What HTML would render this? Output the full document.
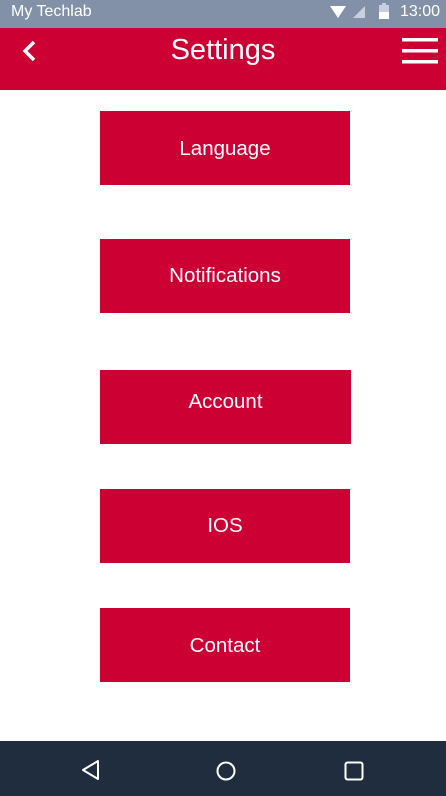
<!DOCTYPE html>
<html><head><style>
body{margin:0;width:446px;height:796px;position:relative;background:#fff;font-family:"Liberation Sans",sans-serif;overflow:hidden}
.sb{position:absolute;top:0;left:0;width:446px;height:28px;background:#8291a8;color:#fff;font-size:16px}
.hd{position:absolute;top:28px;left:0;width:446px;height:62px;background:#cc0033;color:#fff}
.b{position:absolute;left:100px;width:250px;height:74px;background:#cc0033;color:#fff;font-size:20.5px;display:flex;align-items:center;justify-content:center}
.nav{position:absolute;top:741px;left:0;width:446px;height:55px;background:#1f2d3f}
</style></head><body>
<div class="sb"><span style="position:absolute;left:11px;top:3px">My Techlab</span>
<svg style="position:absolute;left:330px;top:5px" width="16" height="14"><path d="M0 1 L16 1 L8 13 Z" fill="#fff"/></svg>
<svg style="position:absolute;left:353px;top:6px" width="12" height="12"><path d="M0 12 L12 0 L12 12 Z" fill="#c8d0dc"/></svg>
<svg style="position:absolute;left:379px;top:3px" width="10" height="16"><rect x="3" y="0" width="4" height="2" fill="#c8d0dc"/><rect x="0" y="2" width="10" height="14" fill="#c8d0dc"/><rect x="0" y="9" width="10" height="7" fill="#fff"/></svg>
<span style="position:absolute;left:400px;top:3px">13:00</span></div>
<div class="hd">
<svg style="position:absolute;left:20px;top:12px" width="18" height="22"><path d="M14 2 L5 11 L14 20" stroke="#fff" stroke-width="3.5" fill="none"/></svg>
<div style="position:absolute;left:0;width:446px;top:6px;text-align:center;font-size:29px">Settings</div>
<svg style="position:absolute;left:402px;top:10px" width="36" height="26"><rect y="0" width="36" height="3.5" fill="#fff"/><rect y="11" width="36" height="3.5" fill="#fff"/><rect y="22" width="36" height="3.5" fill="#fff"/></svg>
</div>
<div class="b" style="top:111px;padding-top:2px;height:72px">Language</div>
<div class="b" style="top:239px">Notifications</div>
<div class="b" style="top:370px;width:251px;padding-bottom:10px;height:64px">Account</div>
<div class="b" style="top:489px">IOS</div>
<div class="b" style="top:608px;padding-top:2px;height:72px">Contact</div>
<div class="nav">
<svg style="position:absolute;left:80px;top:18px" width="22" height="22"><path d="M18 2 L3 11 L18 20 Z" stroke="#fff" stroke-width="2" fill="none" stroke-linejoin="round"/></svg>
<svg style="position:absolute;left:215px;top:19px" width="22" height="22"><circle cx="11" cy="11" r="8.5" stroke="#fff" stroke-width="2" fill="none"/></svg>
<svg style="position:absolute;left:344px;top:20px" width="20" height="20"><rect x="1.5" y="1.5" width="17" height="17" rx="2" stroke="#fff" stroke-width="2" fill="none"/></svg>
</div>
</body></html>
